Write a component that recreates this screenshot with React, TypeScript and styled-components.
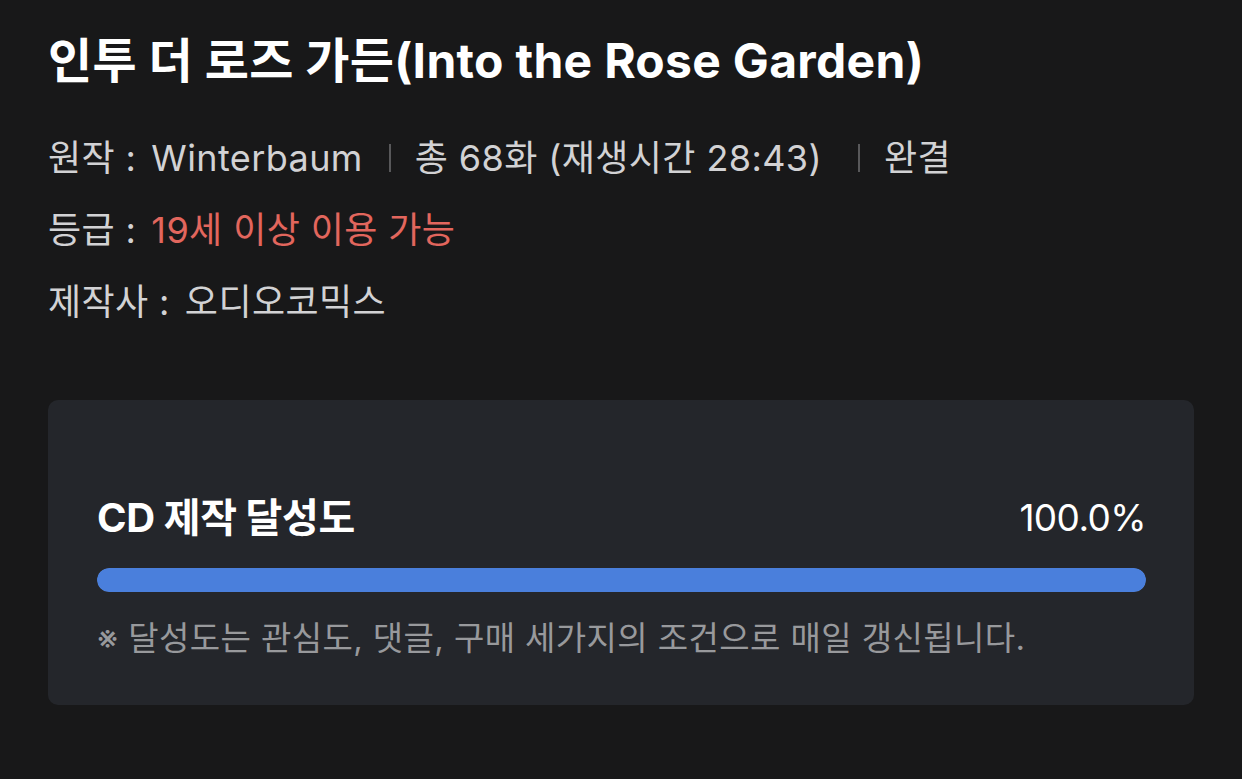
import styled, { createGlobalStyle } from 'styled-components';

const GlobalStyle = createGlobalStyle`
  html, body {
    margin: 0;
    padding: 0;
    background: #181819;
  }
  body {
    font-family: Inter, "Noto Sans CJK KR", sans-serif;
    color: #fff;
  }
`;

const Page = styled.div`
  padding: 34px 48px 60px 48px;
  width: 1146px;
`;

const Title = styled.h1`
  margin: 0;
  font-size: 48px;
  line-height: 54px;
  font-weight: 700;
  letter-spacing: 0.3px;
  color: #fff;
`;

const Meta = styled.div`
  display: flex;
  flex-direction: column;
  gap: 32px;
  margin-top: 50px;
`;

const Row = styled.div`
  display: flex;
  align-items: center;
  font-size: 36px;
  line-height: 40px;
  color: #d2d2d4;
  letter-spacing: 0.4px;
`;

const Label = styled.span`
  margin-right: 15px;
`;

const Value = styled.span<{ $accent?: boolean }>`
  color: ${(p) => (p.$accent ? '#e2665d' : '#d2d2d4')};
`;

const Divider = styled.span<{ $wide?: boolean }>`
  display: inline-block;
  width: 2px;
  height: 28px;
  background: #58585a;
  margin: 0 24px 0 ${(p) => (p.$wide ? '36px' : '26px')};
`;

const Card = styled.section`
  margin-top: 78px;
  background: #24262b;
  border-radius: 10px;
  padding: 94px 48px 47px 49px;
`;

const CardHead = styled.div`
  display: flex;
  justify-content: space-between;
  align-items: center;
  line-height: 48px;
`;

const CardTitle = styled.span`
  font-size: 40px;
  font-weight: 700;
  letter-spacing: -0.4px;
`;

const Percent = styled.span`
  font-size: 37px;
  font-weight: 400;
  letter-spacing: -0.6px;
`;

const Track = styled.div`
  margin-top: 26px;
  height: 24px;
  border-radius: 12px;
  background: #3a3d44;
  overflow: hidden;
`;

const Fill = styled.div`
  height: 100%;
  border-radius: 12px;
  background: #4a7fdc;
`;

const Note = styled.p`
  margin: 26px 0 0 0;
  font-size: 33px;
  line-height: 40px;
  color: #98999c;
  letter-spacing: 0.4px;
`;

const progress = 100;

export default function App() {
  return (
    <>
      <GlobalStyle />
      <Page>
        <Title>인투 더 로즈 가든(Into the Rose Garden)</Title>
        <Meta>
          <Row>
            <Label>원작 :</Label>
            <Value>Winterbaum</Value>
            <Divider />
            <Value>총 68화 (재생시간 28:43)</Value>
            <Divider $wide />
            <Value>완결</Value>
          </Row>
          <Row>
            <Label>등급 :</Label>
            <Value $accent>19세 이상 이용 가능</Value>
          </Row>
          <Row>
            <Label>제작사 :</Label>
            <Value>오디오코믹스</Value>
          </Row>
        </Meta>
        <Card>
          <CardHead>
            <CardTitle>CD 제작 달성도</CardTitle>
            <Percent>{progress.toFixed(1)}%</Percent>
          </CardHead>
          <Track>
            <Fill style={{ width: `${progress}%` }} />
          </Track>
          <Note>※ 달성도는 관심도, 댓글, 구매 세가지의 조건으로 매일 갱신됩니다.</Note>
        </Card>
      </Page>
    </>
  );
}
